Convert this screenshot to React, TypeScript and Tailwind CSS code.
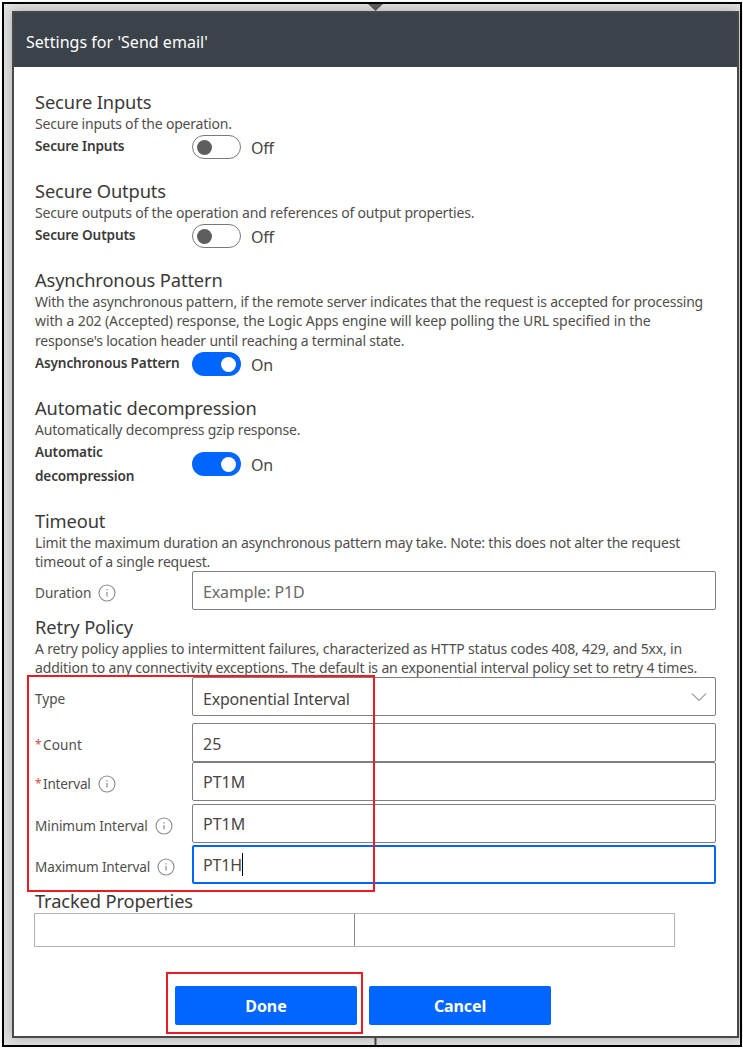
import React from 'react';

function Toggle({ on }: { on?: boolean }) {
  return (
    <div
      className={
        on
          ? 'flex h-6 w-[49px] shrink-0 items-center justify-end rounded-full bg-[#0066ff] pr-[5px]'
          : 'flex h-6 w-[49px] shrink-0 items-center rounded-full border border-[#7a7978] bg-white pl-1'
      }
    >
      <span className={on ? 'size-[15px] rounded-full bg-white' : 'size-[15px] rounded-full bg-[#605e5c]'} />
    </div>
  );
}

function Info() {
  return (
    <svg viewBox="0 0 18 18" className="size-[18px] shrink-0" fill="none" stroke="#8a8a8a">
      <circle cx="9" cy="9" r="8" strokeWidth="1.1" />
      <path d="M9 8v4.6" strokeWidth="1.2" />
      <path d="M9 5.2v1.4" strokeWidth="1.3" />
    </svg>
  );
}

function Title({ children }: { children: React.ReactNode }) {
  return <h2 className="h-6 pl-px text-[18.3px] leading-6 tracking-[-0.13px] text-[#3b3a39]">{children}</h2>;
}

function Description({ lines }: { lines: { text: string; tracking: string }[] }) {
  return (
    <div className="pl-px text-[14px] leading-[19.4px] whitespace-nowrap text-[#504e4c]">
      {lines.map((l) => (
        <p key={l.text} className={l.tracking}>{l.text}</p>
      ))}
    </div>
  );
}

function ToggleRow({ label, on, className }: { label: React.ReactNode; on?: boolean; className: string }) {
  return (
    <div className={`flex ${className}`}>
      <div className="w-[158px] pt-px pl-px text-[13.6px] leading-6 font-semibold tracking-[-0.14px] whitespace-nowrap text-[#3b3a39]">{label}</div>
      <div className="flex items-center self-center pt-[2px]">
        <Toggle on={on} />
        <span className="pt-[2px] pl-[10px] text-[16px] leading-[22px] tracking-[-0.2px] text-[#484644]">{on ? 'On' : 'Off'}</span>
      </div>
    </div>
  );
}

function Field({
  label, labelClass = '', required, info, className, inputClass = 'pt-[2px]', children, focused,
}: {
  label: string; labelClass?: string; required?: boolean; info?: boolean;
  className: string; inputClass?: string; children: React.ReactNode; focused?: boolean;
}) {
  return (
    <div className={`flex ${className}`}>
      <div className="flex w-[158px] items-center pt-[5px] pl-px text-[13.6px] whitespace-nowrap text-[#504e4c]">
        {required && <span className="w-2 text-[12px] text-[#e0444a]">*</span>}
        <span className={`mr-[7px] ${labelClass}`}>{label}</span>
        {info && <Info />}
      </div>
      <div
        className={
          focused
            ? 'flex flex-1 items-center rounded-[2px] border-2 border-[#0066ff] px-[9px] pt-px text-[16px] text-[#484644]'
            : `flex flex-1 items-center rounded-[2px] border border-[#807f7e] pr-2 pl-[10px] text-[16px] text-[#484644] ${inputClass}`
        }
      >
        {children}
      </div>
    </div>
  );
}

export default function App() {
  return (
    <div className="h-[1049px] w-[743px] overflow-hidden bg-white pt-[2px] pl-[2px] font-['Noto_Sans','Open_Sans',sans-serif]">
      <div className="relative h-[1045px] w-[740px] border-2 border-black bg-[#e2e2e2] pt-[7px] pl-2">
        <svg className="absolute top-0 left-[364px] h-[7px] w-4" viewBox="0 0 16 7">
          <path d="M0 0h15L7.5 7z" fill="#605e5c" />
        </svg>
        <svg className="absolute bottom-0 left-[364px] h-2 w-4" viewBox="0 0 16 8">
          <path d="M7.5 0v8" stroke="#484644" strokeWidth="2" />
        </svg>

        <div className="relative flex h-[1027px] w-[727px] flex-col border-2 border-[#484848] bg-white shadow-[0_0_12px_rgba(0,0,0,0.25)]">
          <header className="flex h-[54px] shrink-0 items-center bg-[#3b424a] pl-3 text-[16px] tracking-[0.03px] text-white">
            <span className="pt-[3px]">Settings for 'Send email'</span>
          </header>

          <main className="relative flex flex-1 flex-col pt-[23px] pl-5">
            <section className="h-[89px]">
              <Title>Secure Inputs</Title>
              <Description lines={[{ text: 'Secure inputs of the operation.', tracking: 'tracking-[-0.2px]' }]} />
              <ToggleRow label="Secure Inputs" className="h-[26px]" />
            </section>

            <section className="h-[89px]">
              <Title>Secure Outputs</Title>
              <Description lines={[{ text: 'Secure outputs of the operation and references of output properties.', tracking: 'tracking-[-0.18px]' }]} />
              <ToggleRow label="Secure Outputs" className="h-[26px]" />
            </section>

            <section className="h-[128px]">
              <Title>Asynchronous Pattern</Title>
              <Description
                lines={[
                  { text: 'With the asynchronous pattern, if the remote server indicates that the request is accepted for processing', tracking: 'tracking-[-0.19px]' },
                  { text: 'with a 202 (Accepted) response, the Logic Apps engine will keep polling the URL specified in the', tracking: 'tracking-[-0.1px]' },
                  { text: "response's location header until reaching a terminal state.", tracking: 'tracking-[-0.2px]' },
                ]}
              />
              <ToggleRow label="Asynchronous Pattern" on className="h-[26px]" />
            </section>

            <section className="h-[113px]">
              <Title>Automatic decompression</Title>
              <Description lines={[{ text: 'Automatically decompress gzip response.', tracking: 'tracking-[-0.18px]' }]} />
              <ToggleRow label={<>Automatic<br />decompression</>} on className="h-12" />
            </section>

            <section className="h-[106px]">
              <Title>Timeout</Title>
              <Description
                lines={[
                  { text: 'Limit the maximum duration an asynchronous pattern may take. Note: this does not alter the request', tracking: 'tracking-[-0.21px]' },
                  { text: 'timeout of a single request.', tracking: 'tracking-[-0.2px]' },
                ]}
              />
              <Field label="Duration" info className="-mt-px h-[39px] w-[682px]">
                <span className="pt-px tracking-[-0.15px] text-[#6b6967]">Example: P1D</span>
              </Field>
            </section>

            <section className="h-[274px]">
              <Title>Retry Policy</Title>
              <Description
                lines={[
                  { text: 'A retry policy applies to intermittent failures, characterized as HTTP status codes 408, 429, and 5xx, in', tracking: 'tracking-[-0.17px]' },
                  { text: 'addition to any connectivity exceptions. The default is an exponential interval policy set to retry 4 times.', tracking: 'tracking-[-0.15px]' },
                ]}
              />
              <Field label="Type" className="-mt-[1px] h-[39px] w-[682px]" inputClass="pt-[5px]">
                <span className="flex-1 tracking-[-0.2px]">Exponential Interval</span>
                <svg viewBox="0 0 16 10" className="-mt-[3px] h-[10px] w-4" fill="none" stroke="#605e5c">
                  <path d="M1 1.5l7 7 7-7" />
                </svg>
              </Field>
              <Field label="Count" labelClass="tracking-[0.1px]" required className="mt-[7px] h-[39px] w-[682px]" inputClass="pt-[3px]">25</Field>
              <Field label="Interval" labelClass="tracking-[-0.2px]" required info className="h-[39px] w-[682px]">PT1M</Field>
              <Field label="Minimum Interval" labelClass="tracking-[-0.1px]" info className="mt-[3px] h-[39px] w-[682px]">PT1M</Field>
              <Field label="Maximum Interval" labelClass="tracking-[-0.14px]" info focused className="mt-[2px] h-[39px] w-[682px]">
                <span className="tracking-[-0.2px]">PT1H</span><span className="h-[23px] w-px bg-black" />
              </Field>
            </section>

            <section className="h-[97px]">
              <Title>Tracked Properties</Title>
              <div className="flex h-[34px] w-[641px] border border-[#b3b3b3]">
                <div className="w-[320px] border-r border-[#8a8a8a]" />
              </div>
            </section>

            <div className="flex gap-3 pl-[141px] text-[16px] font-bold tracking-[-0.1px] text-white">
              <div className="flex h-[39px] w-[182px] items-center justify-center rounded-[2px] bg-[#0066ff]">Done</div>
              <div className="flex h-[39px] w-[182px] items-center justify-center rounded-[2px] bg-[#0066ff]">Cancel</div>
            </div>

            <div className="absolute top-[608px] left-[13px] h-[217px] w-[348px] border-2 border-[#ed1c24]" />
            <div className="absolute top-[905px] left-[152px] h-[62px] w-[197px] border-2 border-[#ed1c24]" />
          </main>
        </div>
      </div>
    </div>
  );
}
